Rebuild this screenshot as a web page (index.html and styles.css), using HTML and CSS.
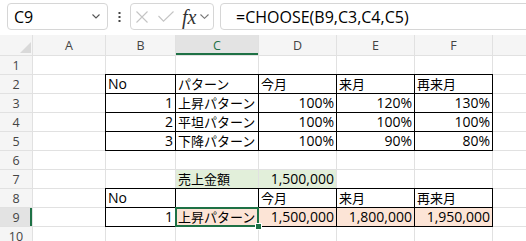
FILE: index.html
```html
<!DOCTYPE html>
<html>
  <head>
    <meta charset="utf-8" />
    <title>CHOOSE</title>
    <link rel="stylesheet" href="styles.css">
  </head>
  <body>
    <!-- formula bar -->
    <div class="toolbar">
      <div class="namebox">
        <span>C9</span>
        <svg width="8" height="5" viewBox="0 0 8 5"><path d="M0.5 0.5 L4 4 L7.5 0.5" fill="none" stroke="#555" stroke-width="1.1"/></svg>
      </div>
      <div class="dots">
        <svg width="3" height="11" viewBox="0 0 3 11"><rect x="0.5" y="0" width="2" height="2" fill="#444"/><rect x="0.5" y="4" width="2" height="2" fill="#444"/><rect x="0.5" y="8" width="2" height="2" fill="#444"/></svg>
      </div>
      <div class="fnbox">
        <svg width="12" height="12" viewBox="0 0 12 12"><path d="M0.5 0.5 L11.5 11.5 M11.5 0.5 L0.5 11.5" stroke="#c4c4c4" stroke-width="1.1" fill="none"/></svg>
        <svg class="check" width="16" height="11" viewBox="0 0 16 11"><path d="M0.5 5 L5.5 10.2 L15.5 0.5" stroke="#c4c4c4" stroke-width="1.1" fill="none"/></svg>
        <span class="fx">fx</span>
        <svg class="fxdown" width="9" height="5" viewBox="0 0 9 5"><path d="M0.5 0.5 L4.5 4.3 L8.5 0.5" fill="none" stroke="#777" stroke-width="1.1"/></svg>
      </div>
      <div class="formula">=CHOOSE(B9,C3,C4,C5)</div>
    </div>

    <!-- sheet -->
    <div class="sheet">
      <div class="corner"><svg width="11" height="11" viewBox="0 0 11 11"><polygon points="11,0 11,11 0,11" fill="#d9d9d9"/></svg></div>
      <div class="ch">A</div><div class="ch">B</div><div class="ch on">C</div><div class="ch">D</div><div class="ch">E</div><div class="ch">F</div><div class="ch">G</div>

      <div class="rh">1</div>
      <div class="c"></div><div class="c"></div><div class="c"></div><div class="c"></div><div class="c"></div><div class="c"></div><div class="c"></div>

      <div class="rh">2</div>
      <div class="c"></div>
      <div class="c b">No</div>
      <div class="c b jp">パターン</div>
      <div class="c b jp">今月</div>
      <div class="c b jp">来月</div>
      <div class="c b jp">再来月</div>
      <div class="c"></div>

      <div class="rh">3</div>
      <div class="c"></div>
      <div class="c b r">1</div>
      <div class="c b jp">上昇パターン</div>
      <div class="c b r">100%</div>
      <div class="c b r">120%</div>
      <div class="c b r">130%</div>
      <div class="c"></div>

      <div class="rh">4</div>
      <div class="c"></div>
      <div class="c b r">2</div>
      <div class="c b jp">平坦パターン</div>
      <div class="c b r">100%</div>
      <div class="c b r">100%</div>
      <div class="c b r">100%</div>
      <div class="c"></div>

      <div class="rh">5</div>
      <div class="c"></div>
      <div class="c b r">3</div>
      <div class="c b jp">下降パターン</div>
      <div class="c b r">100%</div>
      <div class="c b r">90%</div>
      <div class="c b r">80%</div>
      <div class="c"></div>

      <div class="rh">6</div>
      <div class="c"></div><div class="c"></div><div class="c"></div><div class="c"></div><div class="c"></div><div class="c"></div><div class="c"></div>

      <div class="rh">7</div>
      <div class="c"></div>
      <div class="c"></div>
      <div class="c g jp">売上金額</div>
      <div class="c g r">1,500,000</div>
      <div class="c"></div>
      <div class="c"></div>
      <div class="c"></div>

      <div class="rh">8</div>
      <div class="c"></div>
      <div class="c b">No</div>
      <div class="c b"></div>
      <div class="c b jp">今月</div>
      <div class="c b jp">来月</div>
      <div class="c b jp">再来月</div>
      <div class="c"></div>

      <div class="rh on">9</div>
      <div class="c"></div>
      <div class="c b r">1</div>
      <div class="c b o jp sel">上昇パターン</div>
      <div class="c b o r">1,500,000</div>
      <div class="c b o r">1,800,000</div>
      <div class="c b o r">1,950,000</div>
      <div class="c"></div>

      <div class="rh">10</div>
      <div class="c"></div><div class="c"></div><div class="c"></div><div class="c"></div><div class="c"></div><div class="c"></div><div class="c"></div>
    </div>
  </body>
</html>
```

FILE: styles.css
```css
/* Spreadsheet with formula bar */
body {
  margin: 0;
  width: 526px;
  height: 241px;
  overflow: hidden;
  background-color: #fff;
  font-family: "Open Sans", "Noto Sans CJK JP", sans-serif;
  color: #000;
}

/* formula bar */
.toolbar {
  display: flex;
  align-items: flex-start;
  height: 35px;
  padding: 3px 0 0 7px;
  box-sizing: border-box;
}
.namebox {
  width: 101px;
  height: 27px;
  box-sizing: border-box;
  border: 1px solid #d6d6d6;
  border-radius: 4px;
  display: flex;
  align-items: center;
  justify-content: space-between;
  padding: 0 7px 0 6px;
  font-size: 16px;
}
.dots {
  width: 22px;
  height: 27px;
  display: flex;
  align-items: center;
  justify-content: center;
  padding-top: 1px;
  box-sizing: border-box;
}
.fnbox {
  width: 84px;
  height: 27px;
  box-sizing: border-box;
  border: 1px solid #d6d6d6;
  border-radius: 4px;
  display: flex;
  align-items: center;
  padding-left: 5px;
}
.fnbox .check {
  margin-left: 10px;
}
.fx {
  margin-left: 8px;
  font-family: "Liberation Serif", serif;
  font-style: italic;
  font-size: 20px;
  color: #333;
  line-height: 1;
}
.fnbox .fxdown {
  margin-left: 4px;
}
.formula {
  flex: 1;
  height: 27px;
  box-sizing: border-box;
  margin: 0 -12px 0 6px;
  border: 1px solid #d6d6d6;
  border-radius: 4px;
  display: flex;
  align-items: center;
  padding-left: 15px;
  font-size: 16px;
}

/* grid */
.sheet {
  display: grid;
  grid-template-columns: 32px 72px 69px 82px 77px 77px 77px 77px;
  grid-template-rows: 20px repeat(10, 18px);
  gap: 1px;
  width: max-content;
  background-color: #e1e1e1;
}
.corner,
.ch,
.rh {
  background-color: #f5f5f5;
  color: #444;
  font-size: 12.5px;
  display: flex;
  align-items: center;
  justify-content: center;
}
.corner {
  justify-content: flex-end;
  align-items: flex-end;
  padding: 0 1px 2px 0;
}
.ch.on {
  background-color: #e3e3e3;
  color: #1e7145;
  box-shadow: inset 0 -2px 0 #1e7145;
}
.rh.on {
  background-color: #e3e3e3;
  box-shadow: inset -2px 0 0 #1e7145;
}
.c {
  background-color: #fff;
  font-size: 14px;
  line-height: 18px;
  padding: 0 2px;
  white-space: nowrap;
}
.r {
  text-align: right;
}
.jp {
  font-size: 13px;
}
.b {
  box-shadow: 0 0 0 1px #000;
}
.g {
  background-color: #e2efda;
}
.o {
  background-color: #fce4d6;
}
.sel {
  position: relative;
  z-index: 1;
  outline: 2px solid #1e7145;
  outline-offset: -1px;
}
.sel::after {
  content: "";
  position: absolute;
  right: -4px;
  bottom: -4px;
  width: 5px;
  height: 5px;
  background-color: #1e7145;
  border: 1px solid #fff;
}
```
